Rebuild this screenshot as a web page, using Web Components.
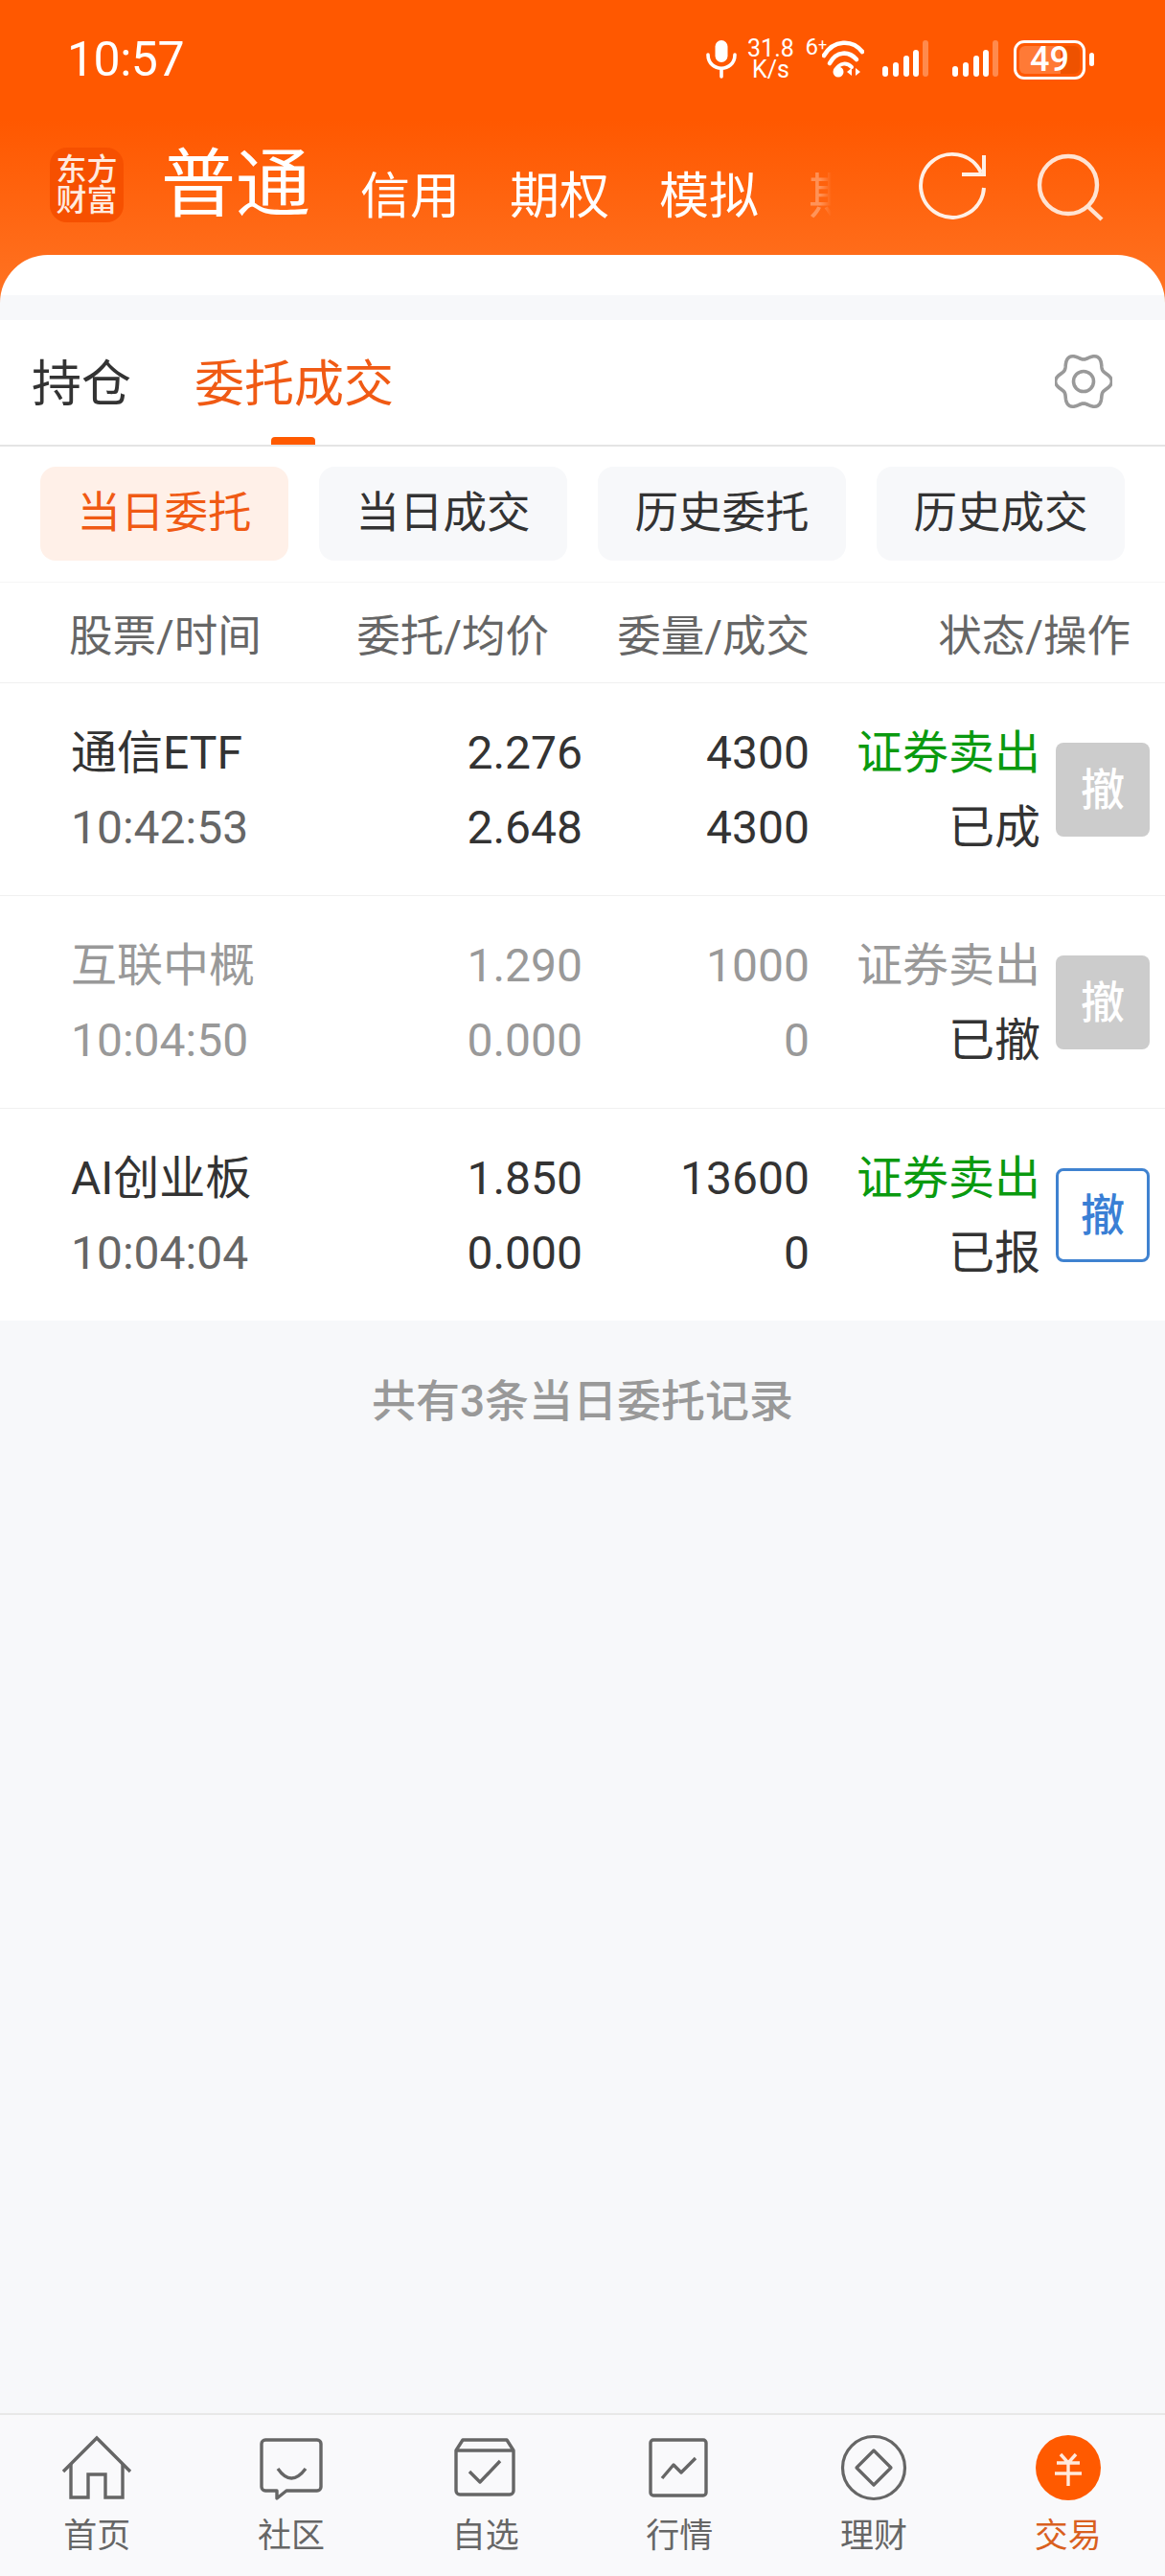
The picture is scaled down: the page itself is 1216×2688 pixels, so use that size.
<!DOCTYPE html>
<html lang="zh">
<head>
<meta charset="utf-8">
<title>交易</title>
<style>
  html, body { margin: 0; padding: 0; }
  body {
    width: 1216px;
    height: 2688px;
    overflow: hidden;
    display: flex;
    flex-direction: column;
    background: #f7f8fa;
    font-family: Roboto, "Noto Sans CJK SC", sans-serif;
  }
  order-list { flex: 1; }
</style>
</head>
<body>
  <trade-header></trade-header>
  <sub-tabs></sub-tabs>
  <filter-pills>
    <filter-pill active>当日委托</filter-pill>
    <filter-pill>当日成交</filter-pill>
    <filter-pill>历史委托</filter-pill>
    <filter-pill>历史成交</filter-pill>
  </filter-pills>
  <order-list summary="共有3条当日委托记录">
    <order-row name="通信ETF" time="10:42:53" price="2.276" avg="2.648" qty="4300" done="4300" side="证券卖出" status="已成" cancel="off"></order-row>
    <order-row name="互联中概" time="10:04:50" price="1.290" avg="0.000" qty="1000" done="0" side="证券卖出" status="已撤" cancel="off" muted></order-row>
    <order-row name="AI创业板" time="10:04:04" price="1.850" avg="0.000" qty="13600" done="0" side="证券卖出" status="已报" cancel="on" last></order-row>
  </order-list>
  <bottom-nav>
    <nav-item label="首页">
      <svg viewBox="0 0 80 80" fill="none" stroke="#666" stroke-width="3.4"><path d="M5 44 40 9l35 35"/><path d="M13 36v35h18V47h18v24h18V36"/></svg>
    </nav-item>
    <nav-item label="社区">
      <svg viewBox="0 0 80 80" fill="none" stroke="#666" stroke-width="3.4" stroke-linejoin="round"><path d="M13 11h54a4 4 0 0 1 4 4v45a4 4 0 0 1-4 4H35l-10 8v-8H13a4 4 0 0 1-4-4V15a4 4 0 0 1 4-4z"/><path d="M26 41q14 20 29 0"/></svg>
    </nav-item>
    <nav-item label="自选">
      <svg viewBox="0 0 80 80" fill="none" stroke="#666" stroke-width="3.4" stroke-linejoin="round"><path d="M9 22l7-11h46l7 11v42a4 4 0 0 1-4 4H13a4 4 0 0 1-4-4z"/><path d="M9 22h60"/><path d="M23 44l11 11 21-22"/></svg>
    </nav-item>
    <nav-item label="行情">
      <svg viewBox="0 0 80 80" fill="none" stroke="#666" stroke-width="3.4" stroke-linejoin="round"><rect x="10" y="11" width="58" height="58" rx="3"/><path d="M22 51l12-14 8 8 15-15"/></svg>
    </nav-item>
    <nav-item label="理财">
      <svg viewBox="0 0 80 80" fill="none" stroke="#666" stroke-width="3.2" stroke-linejoin="round"><circle cx="40" cy="40" r="32.5"/><path d="M40 22l18 18-18 18-18-18z"/></svg>
    </nav-item>
    <nav-item label="交易" active>
      <svg viewBox="0 0 80 80" fill="none" stroke="#ffe9dc" stroke-width="3.4"><circle cx="40" cy="40" r="34" fill="#ff5a00" stroke="none"/><path d="M32 26l8 9 8-9M28 35h24M26 46h28M40 35v24"/></svg>
    </nav-item>
  </bottom-nav>

<script>
class StatusBar extends HTMLElement {
  constructor() {
    super();
    this.attachShadow({ mode: 'open' });
  }

  connectedCallback() {
    const bars = `
      <svg class="signal" viewBox="0 0 49 40" fill="#fff">
        <rect x="0" y="27" width="6" height="11" rx="3"/>
        <rect x="11" y="23" width="6" height="15" rx="3"/>
        <rect x="22" y="16" width="6" height="22" rx="3"/>
        <rect x="32" y="10" width="6" height="28" rx="3"/>
        <rect x="42" y="0" width="6" height="38" rx="3" opacity=".3"/>
      </svg>`;
    this.shadowRoot.innerHTML = `
      <style>
        :host { display: flex; align-items: center; height: 124px; padding: 0 74px 0 70px; color: #fff; }
        .time { font-size: 50px; line-height: 60px; letter-spacing: -.5px; }
        .right { margin-left: auto; display: flex; align-items: center; }
        .mic { width: 32px; height: 40px; margin-right: 9px; }
        .speed { width: 52px; font-size: 25px; line-height: 22px; text-align: center; }
        .net { font-size: 24px; line-height: 20px; margin-left: 10px; margin-right: -5px; align-self: flex-start; margin-top: -1px; }
        .net sup { font-size: 16px; line-height: 0; vertical-align: 5px; }
        .wifi { width: 44px; height: 40px; }
        .signal { width: 49px; height: 40px; margin-left: 19px; }
        .signal + .signal { margin-left: 24px; }
        .battery { box-sizing: border-box; width: 75px; height: 41px; margin-left: 15px; border: 3px solid #fff; border-radius: 11px; padding: 3px; }
        .fill {
          height: 100%; border-radius: 6px; text-align: center;
          font-size: 36px; font-weight: 500; line-height: 29px;
          background: linear-gradient(90deg, #ff7a36 68%, #ee5200 68%);
        }
        .nub { width: 5px; height: 14px; margin-left: 4px; border-radius: 3px; background: #fff; }
      </style>
      <span class="time">10:57</span>
      <div class="right">
        <svg class="mic" viewBox="0 0 32 40" fill="none" stroke="#fff" stroke-width="3.6" stroke-linecap="round">
          <rect x="9.5" y="0" width="13" height="23" rx="6.5" fill="#fff" stroke="none"/>
          <path d="M2 15c0 19 28 19 28 0"/><path d="M16 30v8"/>
        </svg>
        <div class="speed">31.8<br>K/s</div>
        <div class="net">6<sup>+</sup></div>
        <svg class="wifi" viewBox="0 0 44 40" fill="none" stroke="#fff" stroke-width="4.6" stroke-linecap="round">
          <path d="M2 16C12 -1 32 -1 42 12"/>
          <path d="M8 24C15 11 28 11 36 20"/>
          <path d="M14 31C19 23 26 23 31 28" stroke-width="4"/>
          <circle cx="17" cy="33" r="5.5" fill="#fff" stroke="none"/>
          <path d="M31 29v8l-5-4zM35 29v8l5-4z" fill="#fff" stroke="none"/>
        </svg>
        ${bars}${bars}
        <div class="battery"><div class="fill">49</div></div>
        <div class="nub"></div>
      </div>
    `;
  }
}

class TradeHeader extends HTMLElement {
  constructor() {
    super();
    this.attachShadow({ mode: 'open' });
  }

  connectedCallback() {
    this.shadowRoot.innerHTML = `
      <style>
        :host {
          display: block; height: 334px; color: #fff;
          background: linear-gradient(#ff5800 0, #ff5800 125px, #ff7424 320px);
        }
        .nav { display: flex; align-items: center; height: 142px; padding-left: 52px; padding-right: 61px; }
        .logo {
          box-sizing: border-box; width: 77px; height: 78px; margin-top: -4px;
          border-radius: 18px; background: #f65000; color: #ffeadf;
          font-size: 32px; line-height: 32px; text-align: center; padding-top: 7px; font-weight: 500;
        }
        .tabs { display: flex; align-items: flex-end; gap: 52px; margin-left: 39px; margin-top: -2px; }
        .tabs span { font-size: 52px; line-height: 52px; }
        .tabs .on { font-size: 78px; line-height: 76px; font-weight: 400; }
        .tabs .fade {
          color: rgba(255,255,255,.3); white-space: nowrap;
          -webkit-mask-image: linear-gradient(90deg, #000 12px, transparent 24px);
          mask-image: linear-gradient(90deg, #000 12px, transparent 24px);
        }
        .icons { margin-left: auto; display: flex; gap: 41px; margin-top: -4px; }
        .icons svg { width: 80px; height: 80px; display: block; }
        .cap {
          height: 68px; border-radius: 50px 50px 0 0;
          background: linear-gradient(#fff 42px, #f7f8fa 42px);
        }
      </style>
      <status-bar></status-bar>
      <div class="nav">
        <div class="logo">东方<br>财富</div>
        <div class="tabs">
          <span class="on">普通</span><span>信用</span><span>期权</span><span>模拟</span><span class="fade">期货</span>
        </div>
        <div class="icons">
          <svg viewBox="0 0 80 80" fill="none" stroke="#fff0e6" stroke-width="4">
            <path d="M73 43A33 33 0 1 1 70 27"/><path d="M50 29h23V9"/>
          </svg>
          <svg viewBox="0 0 80 80" fill="none" stroke="#ffe3d2" stroke-width="4.4">
            <circle cx="40" cy="40" r="30"/><path d="M60 62l15 14"/>
          </svg>
        </div>
      </div>
      <div class="cap"></div>
    `;
  }
}

class SubTabs extends HTMLElement {
  constructor() {
    super();
    this.attachShadow({ mode: 'open' });
  }

  gearPath() {
    // six soft lobes, r varies with cos(6t)
    const pts = [];
    for (let i = 0; i < 120; i++) {
      const t = i / 120 * Math.PI * 2;
      const r = 26.2 + 3.2 * Math.cos(6 * t);
      pts.push((30 + r * Math.cos(t)).toFixed(2) + ' ' + (30 + r * Math.sin(t)).toFixed(2));
    }
    return 'M' + pts.join('L') + 'Z';
  }

  connectedCallback() {
    this.shadowRoot.innerHTML = `
      <style>
        :host {
          display: flex; align-items: center; height: 130px;
          background: #fff; border-bottom: 2px solid #e4e4e4; padding: 0 55px 0 33px;
        }
        .tab { font-size: 52px; line-height: 124px; padding-top: 6px; color: #333; position: relative; }
        .tab.on { color: #f05a14; margin-left: 66px; }
        .tab.on::after {
          content: ''; position: absolute; left: 80px; bottom: 0;
          width: 46px; height: 8px; border-radius: 4px 4px 0 0; background: #ff5a00;
        }
        svg { margin-left: auto; width: 60px; height: 60px; margin-top: -2px; }
      </style>
      <span class="tab">持仓</span>
      <span class="tab on">委托成交</span>
      <svg viewBox="0 0 60 60" fill="none" stroke="#999" stroke-width="3.6">
        <path d="${this.gearPath()}"/><circle cx="30" cy="30" r="10.5"/>
      </svg>
    `;
  }
}

class FilterPills extends HTMLElement {
  constructor() {
    super();
    this.attachShadow({ mode: 'open' });
    this.shadowRoot.innerHTML = `
      <style>
        :host {
          display: flex; gap: 32px; padding: 21px 42px 22px;
          background: #fff; border-bottom: 1px solid #f6f6f6;
        }
      </style>
      <slot></slot>
    `;
  }
}

class FilterPill extends HTMLElement {
  constructor() {
    super();
    this.attachShadow({ mode: 'open' });
    this.shadowRoot.innerHTML = `
      <style>
        :host {
          display: block; width: 259px; height: 98px; border-radius: 16px;
          background: #f7f8fa; color: #333;
          font-size: 45.5px; line-height: 98px; text-align: center;
        }
        :host([active]) { background: #fff0e8; color: #f05a14; }
      </style>
      <slot></slot>
    `;
  }
}

class OrderList extends HTMLElement {
  constructor() {
    super();
    this.attachShadow({ mode: 'open' });
  }

  connectedCallback() {
    this.shadowRoot.innerHTML = `
      <style>
        :host { display: block; }
        .head {
          display: flex; height: 104px; align-items: center; padding: 0 36px 0 72px;
          background: #fff; border-bottom: 1px solid #f0f0f0;
          font-size: 45.5px; color: #666; font-weight: 400;
        }
        .head span:nth-child(1) { width: 300px; }
        .head span:nth-child(2) { width: 201px; text-align: right; }
        .head span:nth-child(3) { width: 272px; text-align: right; }
        .head span:nth-child(4) { flex: 1; text-align: right; }
        .summary { margin-top: 52px; font-size: 46px; line-height: 64px; font-weight: 500; color: #999; text-align: center; }
      </style>
      <div class="head"><span>股票/时间</span><span>委托/均价</span><span>委量/成交</span><span>状态/操作</span></div>
      <slot></slot>
      <div class="summary">${this.getAttribute('summary')}</div>
    `;
  }
}

class OrderRow extends HTMLElement {
  constructor() {
    super();
    this.attachShadow({ mode: 'open' });
  }

  connectedCallback() {
    const a = name => this.getAttribute(name);
    this.shadowRoot.innerHTML = `
      <style>
        :host {
          display: grid; grid-template-columns: 320px 214px 237px 241px 98px;
          align-items: center;
          height: 218px; padding: 3px 0 0 74px; background: #fff;
          border-bottom: 1px solid #f0f0f0;
          font-size: 48px; line-height: 78px; color: #333;
        }
        :host([last]) { border-bottom: 0; }
        .col { text-align: right; }
        .col.first { text-align: left; }
        .time { color: #666; }
        .side { color: #0a9a0f; }
        :host([muted]) .dim { color: #999; }
        .btn {
          box-sizing: border-box; width: 98px; height: 98px; margin: -3px 0 0 16px; border-radius: 8px;
          font-size: 46px; font-weight: 500; text-align: center;
        }
        .btn.off { background: #ccc; color: #fff; line-height: 98px; }
        .btn.on { border: 3px solid #3f82d0; color: #3a7fd5; line-height: 92px; }
      </style>
      <div class="col first"><div class="dim">${a('name')}</div><div class="time dim">${a('time')}</div></div>
      <div class="col dim"><div>${a('price')}</div><div>${a('avg')}</div></div>
      <div class="col dim"><div>${a('qty')}</div><div>${a('done')}</div></div>
      <div class="col"><div class="side dim">${a('side')}</div><div>${a('status')}</div></div>
      <div class="btn ${a('cancel')}">撤</div>
    `;
  }
}

class BottomNav extends HTMLElement {
  constructor() {
    super();
    this.attachShadow({ mode: 'open' });
    this.shadowRoot.innerHTML = `
      <style>
        :host {
          display: grid; grid-template-columns: repeat(6, 1fr);
          height: 168px; background: #f9f9fb; border-top: 2px solid #e8e8e8;
        }
      </style>
      <slot></slot>
    `;
  }
}

class NavItem extends HTMLElement {
  constructor() {
    super();
    this.attachShadow({ mode: 'open' });
  }

  connectedCallback() {
    this.shadowRoot.innerHTML = `
      <style>
        :host { display: flex; flex-direction: column; align-items: center; padding-top: 15px; color: #666; font-size: 35px; }
        :host([active]) { color: #d9601f; }
        ::slotted(svg) { width: 80px; height: 80px; display: block; }
        .label { line-height: 42px; margin-top: 11px; }
      </style>
      <slot></slot>
      <div class="label">${this.getAttribute('label')}</div>
    `;
  }
}

customElements.define('status-bar', StatusBar);
customElements.define('trade-header', TradeHeader);
customElements.define('sub-tabs', SubTabs);
customElements.define('filter-pills', FilterPills);
customElements.define('filter-pill', FilterPill);
customElements.define('order-list', OrderList);
customElements.define('order-row', OrderRow);
customElements.define('bottom-nav', BottomNav);
customElements.define('nav-item', NavItem);
</script>
</body>
</html>
